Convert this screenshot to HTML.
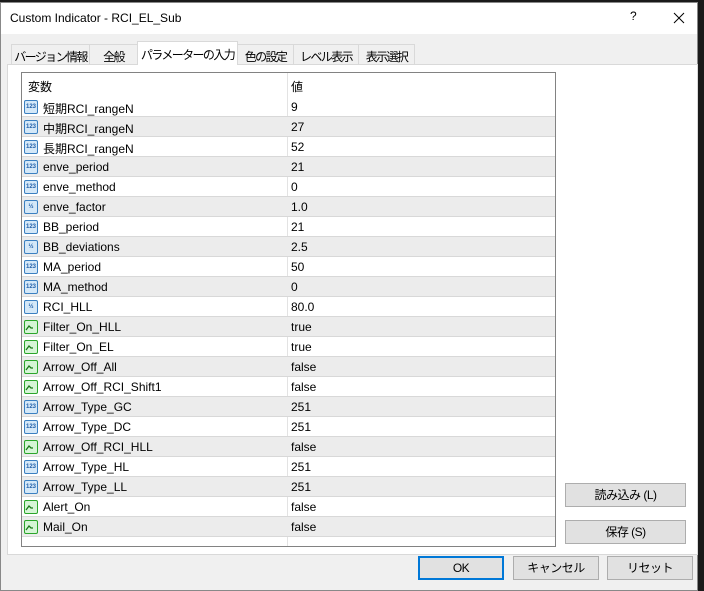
<!DOCTYPE html>
<html><head><meta charset="utf-8"><style>
*{margin:0;padding:0;box-sizing:border-box}
body{width:704px;height:591px;background:#1a1a1a;font-family:"Liberation Sans","Noto Sans CJK JP",sans-serif;font-size:12px;color:#000;position:relative;overflow:hidden}
.win{position:absolute;left:0;top:2px;width:698px;height:589px;background:#f0f0f0;border:1px solid #888}
.title{position:absolute;left:0;top:0;width:100%;height:31px;background:#fff}
.title span{position:absolute;left:9px;top:8px;font-size:12px}
.ab{position:absolute;font-size:15px;top:5px}
.tab{position:absolute;top:41px;height:21px;border:1px solid #d9d9d9;border-bottom:none;background:#f0f0f0;padding-top:3px;white-space:nowrap;text-align:center;letter-spacing:-1.6px;overflow:hidden}
.tab.sel{top:38px;height:24px;background:#fff;z-index:2;padding-top:4px}
.panel{position:absolute;left:6px;top:61px;width:691px;height:491px;background:#fff;border:1px solid #d9d9d9}
.tbl{position:absolute;left:21px;top:72px;width:535px;height:475px;border:1px solid #828282;background:#fff;overflow:hidden}
.row{position:absolute;left:0;width:533px;height:20px;border-bottom:1px solid #d8d8d8}
.row.g{background:#ececec}
.c1{position:absolute;left:21px;top:3px}
.c2{position:absolute;left:269px;top:3px}
.vl{position:absolute;left:265px;top:0;width:1px;height:475px;background:#e3e3e3}
.ic{position:absolute;left:2px;top:3px;width:14px;height:14px;border-radius:2px}
.n{background:#d4e8f8;border:1px solid #3a7fc0;font-size:6px;color:#1f5ea8;font-weight:bold;line-height:12px;text-align:center}
.b{background:#d6f5d6;border:1px solid #2aa52a}
.btn{position:absolute;height:24px;background:#e1e1e1;border:1px solid #adadad;text-align:center;line-height:22px;letter-spacing:-0.5px}
</style></head><body>
<div class="win">
<div class="title"><span>Custom Indicator - RCI_EL_Sub</span><span class="ab" style="left:629px;top:6px">?</span><svg style="position:absolute;left:672px;top:9px" width="12" height="12"><path d="M1 1L11 11M11 1L1 11" stroke="#000" stroke-width="1"/></svg></div>
<div class="tab" style="left:10px;width:79px">バージョン情報</div>
<div class="tab" style="left:88px;width:49px">全般</div>
<div class="tab sel" style="left:136px;width:101px">パラメーターの入力</div>
<div class="tab" style="left:236px;width:57px">色の設定</div>
<div class="tab" style="left:292px;width:66px">レベル表示</div>
<div class="tab" style="left:357px;width:57px">表示選択</div>
<div class="panel"></div>
<div class="btn" style="left:564px;top:480px;width:121px">読み込み (L)</div>
<div class="btn" style="left:564px;top:517px;width:121px">保存 (S)</div>
<div class="btn" style="left:417px;top:553px;width:86px;border:2px solid #0078d7;line-height:20px">OK</div>
<div class="btn" style="left:512px;top:553px;width:86px">キャンセル</div>
<div class="btn" style="left:606px;top:553px;width:86px">リセット</div>
</div>
<div class="tbl">
<div class="vl"></div>
<div class="row" style="top:0;height:24px;border-bottom:none"><span class="c1" style="left:6px;top:5px">変数</span><span class="c2" style="top:5px">値</span></div>
<div id="rows"></div>
</div>
<script>
var d=[["n","短期RCI_rangeN","9"],["n","中期RCI_rangeN","27"],["n","長期RCI_rangeN","52"],["n","enve_period","21"],["n","enve_method","0"],["h","enve_factor","1.0"],["n","BB_period","21"],["h","BB_deviations","2.5"],["n","MA_period","50"],["n","MA_method","0"],["h","RCI_HLL","80.0"],["b","Filter_On_HLL","true"],["b","Filter_On_EL","true"],["b","Arrow_Off_All","false"],["b","Arrow_Off_RCI_Shift1","false"],["n","Arrow_Type_GC","251"],["n","Arrow_Type_DC","251"],["b","Arrow_Off_RCI_HLL","false"],["n","Arrow_Type_HL","251"],["n","Arrow_Type_LL","251"],["b","Alert_On","false"],["b","Mail_On","false"]];
var h="";d.forEach(function(r,i){var ic=r[0]=="b"?'<div class="ic b"><svg width="12" height="12" viewBox="0 0 12 12"><path d="M1 9 L4 5 L6 7 L8 7" stroke="#1a7a1a" fill="none" stroke-width="1.3"/></svg></div>':'<div class="ic n">'+(r[0]=="n"?"123":"½")+'</div>';
h+='<div class="row'+(i%2?' g':'')+'" style="top:'+(24+i*20)+'px">'+ic+'<span class="c1">'+r[1]+'</span><span class="c2">'+r[2]+'</span></div>';});
document.getElementById("rows").innerHTML=h;
</script>
</body></html>
